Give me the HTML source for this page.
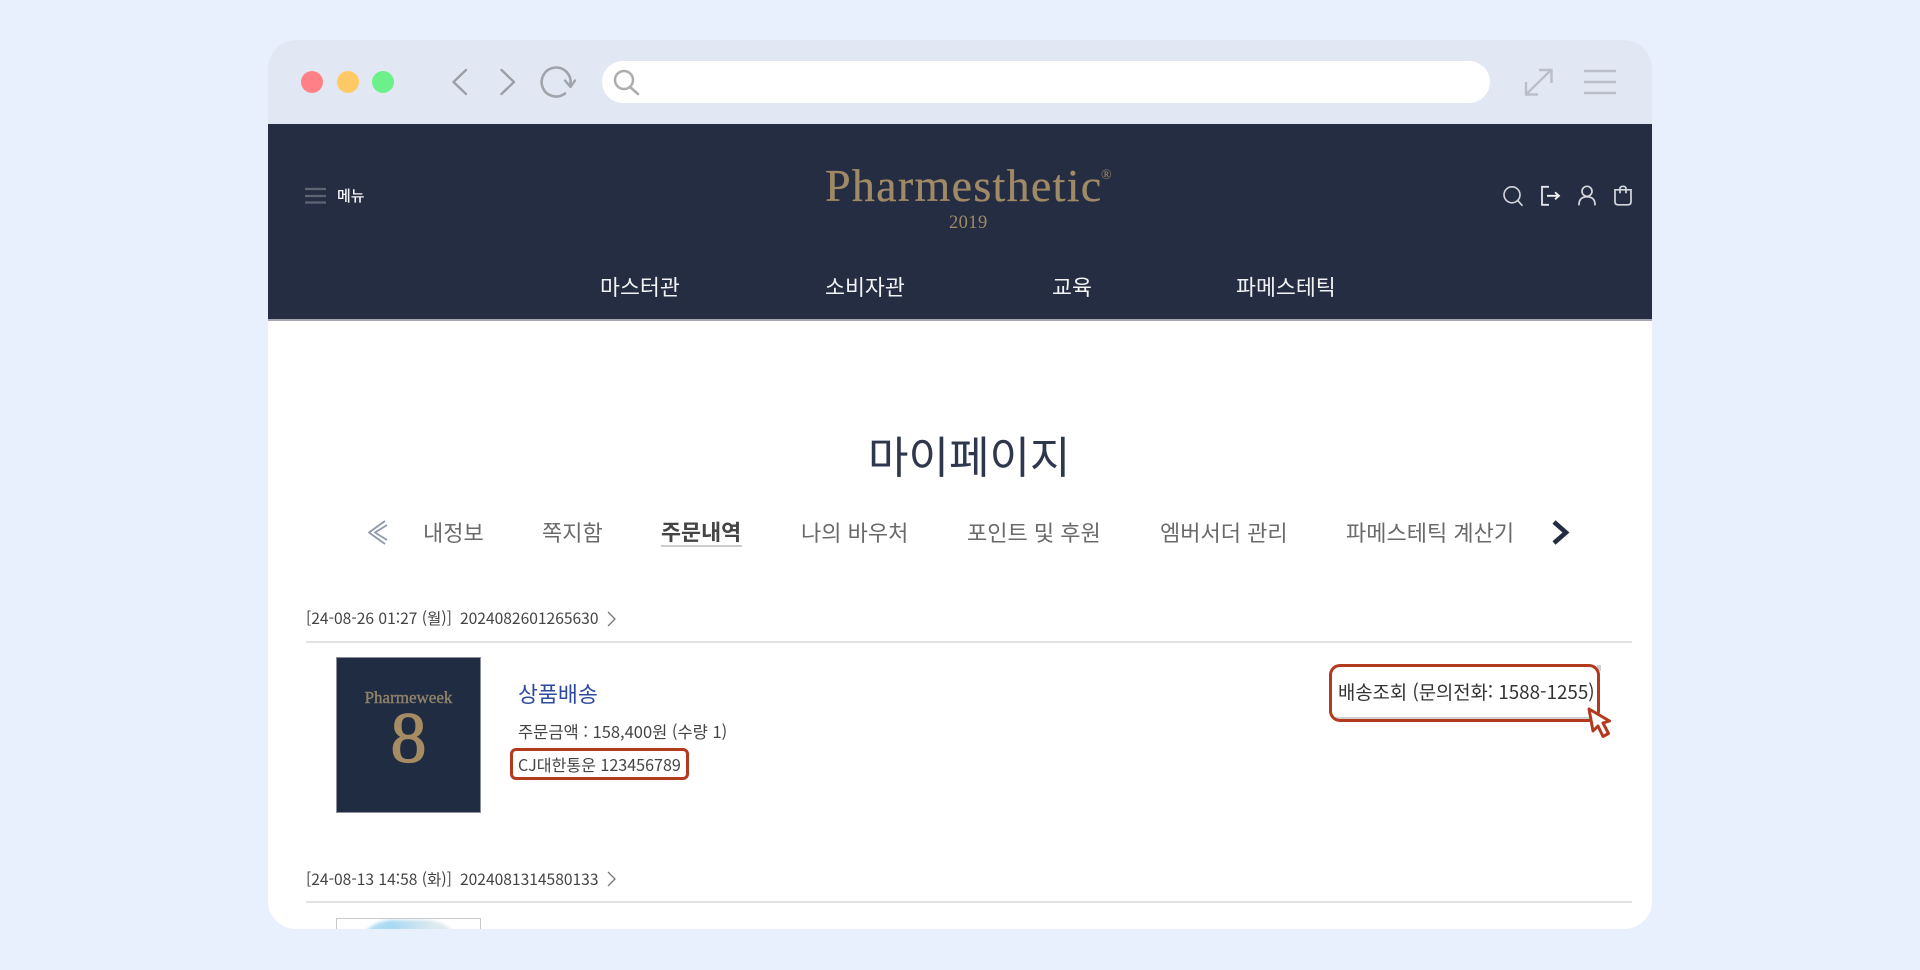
<!DOCTYPE html>
<html lang="ko"><head><meta charset="utf-8"><title>Pharmesthetic</title>
<style>
html,body{margin:0;padding:0;width:1920px;height:970px;overflow:hidden;background:#e8f0fd}
body{position:relative;font-family:"Liberation Sans","Noto Sans CJK KR",sans-serif}
#win{position:absolute;left:268px;top:40px;width:1384px;height:889px;background:#fff;border-radius:28px;overflow:hidden}
#c{position:absolute;left:-268px;top:-40px;width:1920px;height:970px}
.t{position:absolute;white-space:nowrap;font-family:"Noto Sans CJK KR","Liberation Sans",sans-serif}
.b{position:absolute}
svg{position:absolute;left:0;top:0}
.tab{font-size:22px;line-height:30px;top:517px;color:#6a6a6a}
.sm{font-size:15.6px;line-height:24px;color:#444}
.nav{font-size:21.7px;line-height:30px;top:272px;color:#f2f3f5}
</style></head><body>
<div id="win"><div id="c">
<div class="b" style="left:0;top:0;width:1920px;height:124px;background:#e2e8f3"></div>
<div class="b" style="left:0;top:124px;width:1920px;height:196px;background:#252d42"></div>
<div class="b" style="left:0;top:319px;width:1920px;height:2px;background:#a4a7b0"></div>
<div class="b" style="left:602px;top:61px;width:888px;height:42px;background:#fff;border-radius:21px"></div>

<svg width="1920" height="970" viewBox="0 0 1920 970" fill="none">
<circle cx="312" cy="82" r="11" fill="#ff8087"/>
<circle cx="348" cy="82" r="11" fill="#ffc966"/>
<circle cx="383" cy="82" r="11" fill="#6cf08a"/>
<path d="M466 70 453.500 82 466 94M501.500 70 514 82 501.500 94" stroke="#9b9fa6" stroke-width="2.400" stroke-linecap="round" stroke-linejoin="round"/>
<path d="M565 93.500A14.500 14.500 0 1 1 570.500 84" stroke="#a0a3a9" stroke-width="2.600" stroke-linecap="round"/>
<path d="M565 80.500 570.500 87 575 80.500" stroke="#a0a3a9" stroke-width="2.400" stroke-linecap="round" stroke-linejoin="round"/>
<circle cx="624" cy="80" r="9" stroke="#adadad" stroke-width="2.500"/>
<path d="M630 87 638 94" stroke="#adadad" stroke-width="2.600" stroke-linecap="round"/>
<path d="M1526.500 94 1551 70M1539 70H1551.500V83M1526 82V94.500H1538" stroke="#b9bec9" stroke-width="2.400"/>
<path d="M1584 71H1616M1584 82H1616M1584 93H1616" stroke="#b9bec9" stroke-width="2.400"/>
<path d="M305 189H326M305 196H326M305 202.500H326" stroke="#5f6473" stroke-width="2.200"/>
<g transform="translate(0 -.7)">
<circle cx="1512" cy="195.500" r="8" stroke="#d5d7dc" stroke-width="1.600"/>
<path d="M1518 201.500 1522 206" stroke="#d5d7dc" stroke-width="1.600" stroke-linecap="round"/>
<path d="M1549 187.500H1542V205.500H1549" stroke="#e6e7ea" stroke-width="1.800"/>
<path d="M1547 196.500H1558M1555 193 1559 196.500 1555 200" stroke="#f3f4f5" stroke-width="1.800"/>
<circle cx="1587" cy="192" r="5" stroke="#d5d7dc" stroke-width="1.700"/>
<path d="M1579 205.500C1579 200 1582 197.500 1587 197.500S1595 200 1595 205.500" stroke="#d5d7dc" stroke-width="1.700" stroke-linecap="round"/>
<path d="M1615 190.500H1631V202.500Q1631 205.500 1628 205.500H1618Q1615 205.500 1615 202.500Z" stroke="#d5d7dc" stroke-width="1.700"/>
<path d="M1620 194V189.500Q1620 187 1623 187T1626 189.500V194" stroke="#d5d7dc" stroke-width="1.700"/>
</g>
<path d="M385 521 369 532.500 385 544M387 525 375 532.500 387 540" stroke="#8e97ab" stroke-width="1.800" stroke-linejoin="round"/>
<path d="M1554 522 1566 532.500 1554 543" stroke="#252d42" stroke-width="4.600"/>
<path d="M608 872 615 879 608 886M608 612 615 619 608 626" stroke="#777" stroke-width="1.300"/>
</svg>

<div class="t" style="left:337px;top:186px;font-size:15px;line-height:20px;color:#f4f5f6;font-weight:500">메뉴</div>
<div class="b" style="left:825px;top:161px;font:46px/50px 'Liberation Serif',serif;letter-spacing:1.300px;color:#a08a66;white-space:nowrap;-webkit-text-stroke:.3px #a08a66">Pharmesthetic</div>
<div class="b" style="left:1101px;top:169px;font:14px/14px 'Liberation Serif',serif;color:#a08a66">®</div>
<div class="b" style="left:949px;top:213px;font:18.500px/20px 'Liberation Serif',serif;color:#a08a66;letter-spacing:.4px">2019</div>

<div class="t nav" style="left:600px">마스터관</div>
<div class="t nav" style="left:825px">소비자관</div>
<div class="t nav" style="left:1052px">교육</div>
<div class="t nav" style="left:1236px">파메스테틱</div>

<div class="t" style="left:868px;top:424px;font-size:44px;line-height:60px;color:#2f374c">마이페이지</div>

<div class="t tab" style="left:423px">내정보</div>
<div class="t tab" style="left:542px">쪽지함</div>
<div class="t tab" style="left:661px;color:#444;font-weight:700;font-size:21.8px">주문내역</div>
<div class="b" style="left:661px;top:545px;width:81px;height:2px;background:#ccc"></div>
<div class="t tab" style="left:801px">나의 바우처</div>
<div class="t tab" style="left:967px">포인트 및 후원</div>
<div class="t tab" style="left:1160px">엠버서더 관리</div>
<div class="t tab" style="left:1346px">파메스테틱 계산기</div>

<div class="t sm" style="left:306px;top:606px">[24-08-26 01:27 (월)]</div>
<div class="t sm" style="left:460px;top:606px">2024082601265630</div>
<div class="b" style="left:306px;top:641px;width:1326px;height:2px;background:#e2e2e2"></div>

<div class="b" style="left:336px;top:657px;width:145px;height:156px;background:#202c42;box-shadow:inset 0 0 0 1px #8a8f99"></div>
<div class="b" style="left:336px;top:687px;width:145px;text-align:center;font:17px/22px 'Liberation Serif',serif;color:#8f8169;-webkit-text-stroke:.4px #8f8169">Pharmeweek</div>
<div class="b" style="left:336px;top:693px;width:145px;text-align:center;font:72px/90px 'Liberation Serif',serif;color:#a68b63;-webkit-text-stroke:1.200px #a68b63">8</div>

<div class="t" style="left:518px;top:679px;font-size:21.7px;line-height:30px;color:#2c4aa0">상품배송</div>
<div class="t" style="left:518px;top:719px;font-size:16.5px;line-height:24px;color:#444">주문금액 : 158,400원 (수량 1)</div>
<div class="t" style="left:518px;top:752px;font-size:16.1px;line-height:24px;color:#444">CJ대한통운 123456789</div>
<div class="b" style="left:510px;top:748px;width:173px;height:26px;border:3px solid #b33a1e;border-radius:6px"></div>

<div class="b" style="left:1334px;top:717px;width:262px;height:2px;background:#d0d0d0"></div>
<div class="b" style="left:1597px;top:665px;width:4px;height:6px;background:#d0d0d0"></div>
<div class="t" style="left:1338px;top:678px;font-size:18.8px;line-height:28px;color:#333">배송조회 (문의전화: 1588-1255)</div>
<div class="b" style="left:1329px;top:664px;width:265px;height:52px;border:3px solid #b33a1e;border-radius:11px"></div>
<svg width="1920" height="970" viewBox="0 0 1920 970">
<path d="M1589 709 1593 731 1598 726 1603 736.500 1608.500 733.500 1603 723 1609.500 721Z" fill="#fff" stroke="#b33a1e" stroke-width="3" stroke-linejoin="round"/>
</svg>

<div class="t sm" style="left:306px;top:867px">[24-08-13 14:58 (화)]</div>
<div class="t sm" style="left:460px;top:867px">2024081314580133</div>
<div class="b" style="left:306px;top:901px;width:1326px;height:2px;background:#e2e2e2"></div>
<div class="b" style="left:336px;top:918px;width:143px;height:40px;border:1px solid #c9c9c9;overflow:hidden;background:#fff">
<div class="b" style="left:16px;top:1px;width:112px;height:40px;border-radius:40px 40px 0 0;background:linear-gradient(90deg,#bde2f6,#a8d8f3 35%,#dbe9ef 70%,#e6e9ea);filter:blur(1.500px)"></div>
</div>
</div></div>
</body></html>
